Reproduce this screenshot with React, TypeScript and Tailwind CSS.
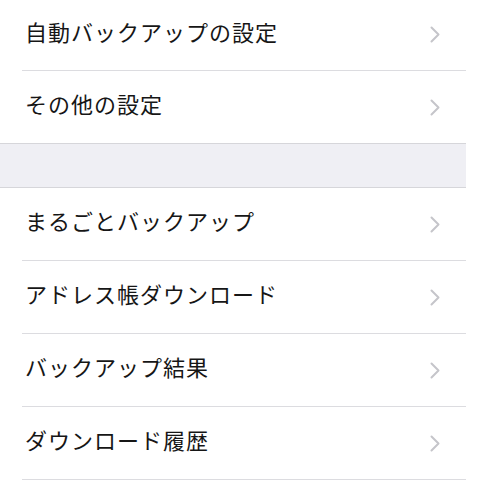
import React from "react";

type Row = { label: string };

const groupOne: Row[] = [{ label: "自動バックアップの設定" }, { label: "その他の設定" }];
const groupTwo: Row[] = [
  { label: "まるごとバックアップ" },
  { label: "アドレス帳ダウンロード" },
  { label: "バックアップ結果" },
  { label: "ダウンロード履歴" },
];

function Chevron() {
  return (
    <svg width="10" height="17" viewBox="0 0 10 17" fill="none" className="shrink-0">
      <path d="M1.5 1.5L8.5 8.5L1.5 15.5" stroke="#c5c5ca" strokeWidth="2" strokeLinecap="round" strokeLinejoin="round" />
    </svg>
  );
}

function ListRow({ label, last, tall }: { label: string; last?: boolean; tall?: boolean }) {
  return (
    <div className="pl-[22px] bg-white">
      <div
        className={`flex items-center justify-between pl-[3px] pr-[26px] ${tall ? "h-[73px]" : "h-[72px]"} ${
          last ? "" : "border-b border-[#dcdce0]"
        }`}
      >
        <span className="text-[22px] text-[#161616] leading-none tracking-[1px] pb-[8px]">{label}</span>
        <Chevron />
      </div>
    </div>
  );
}

export default function App() {
  return (
    <div
      className="w-[480px] h-[480px] overflow-hidden bg-white"
      style={{ fontFamily: '"Noto Sans CJK JP", "Noto Sans", sans-serif' }}
    >
      <div className="w-[466px] -mt-[1px]">
        {groupOne.map((r, i) => (
          <ListRow key={r.label} label={r.label} last={i === groupOne.length - 1} />
        ))}
        <div className="h-[45px] bg-[#efeff4] border-y border-[#d6d6da]" />
        {groupTwo.map((r) => (
          <ListRow key={r.label} label={r.label} tall />
        ))}
      </div>
    </div>
  );
}
